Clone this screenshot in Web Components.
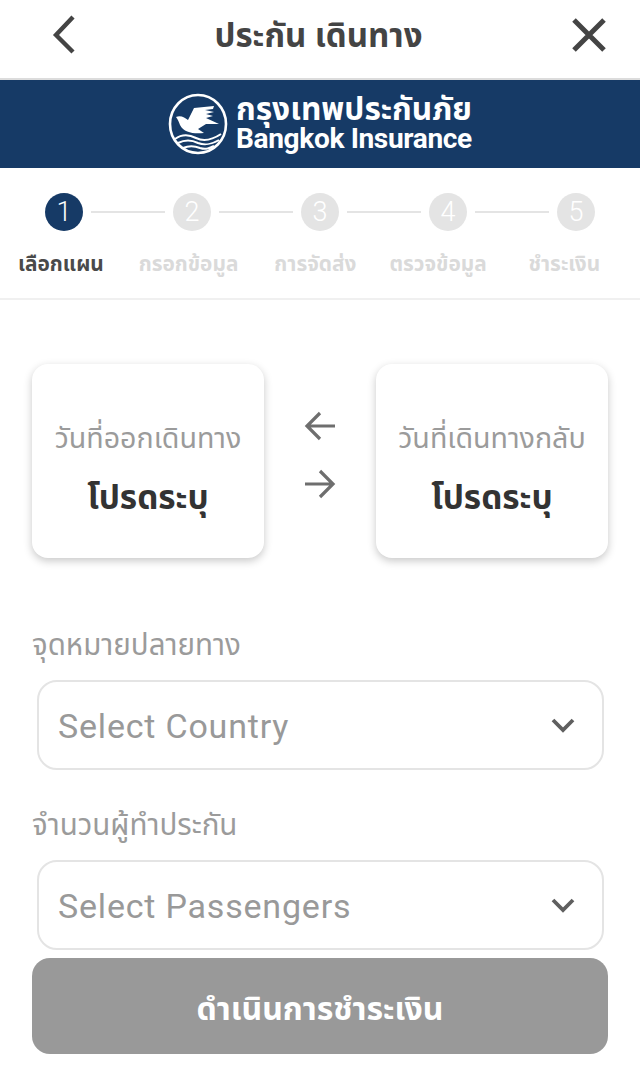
<!DOCTYPE html>
<html lang="th"><head><meta charset="utf-8"><title>ประกัน เดินทาง</title>
<style>
html,body{margin:0;padding:0;background:#fff}
body{width:640px;height:1086px;overflow:hidden;font-family:"Noto Sans","Noto Sans Thai","DejaVu Sans",sans-serif}
</style></head><body>
<app-page>
  <top-bar>ประกัน เดินทาง</top-bar>
  <brand-banner></brand-banner>
  <step-bar></step-bar>
  <date-row></date-row>
  <select-field label="จุดหมายปลายทาง" placeholder="Select Country" style="margin-top:68px"></select-field>
  <select-field label="จำนวนผู้ทำประกัน" placeholder="Select Passengers" style="margin-top:36px"></select-field>
  <pay-button>ดำเนินการชำระเงิน</pay-button>
</app-page>
<script>
const THAI='"Noto Sans","Noto Sans Thai","DejaVu Sans",sans-serif';
function def(name,html){
  customElements.define(name,class extends HTMLElement{
    connectedCallback(){
      if(this.shadowRoot)return;
      const r=this.attachShadow({mode:'open'});
      r.innerHTML=typeof html==='function'?html(this):html;
    }
  });
}
def('app-page',`<style>:host{display:flex;flex-direction:column;width:640px;height:1086px}</style><slot></slot>`);
def('top-bar',`<style>
:host{display:flex;align-items:center;justify-content:space-between;height:70px;padding:0 23px 8px 36px;border-bottom:2px solid #dcdcdc;background:#fff;color:#444;flex:none}
.t{font:700 33px/44px ${THAI};flex:1;text-align:center;padding-right:16px;white-space:nowrap}
svg{display:block;flex:none}
</style>
<svg width="56" height="56" viewBox="0 0 56 56"><path d="M37 10 L20 28 L37 45" fill="none" stroke="#444" stroke-width="4.400"/></svg>
<div class="t"><slot></slot></div>
<svg width="56" height="56" viewBox="0 0 56 56"><path d="M13 13 L43 43 M43 13 L13 43" fill="none" stroke="#444" stroke-width="5"/></svg>`);
def('brand-banner',`<style>
:host{display:flex;align-items:center;justify-content:center;height:88px;background:#163a66;color:#fff;gap:8px;flex:none}
.w{display:flex;flex-direction:column;align-items:flex-start;width:236px;margin-top:-2px}
.th{font:700 31px/30px ${THAI};white-space:nowrap;transform:scaleX(1.02);transform-origin:left;padding-bottom:2px}
.en{font:700 27px/28px "Roboto",sans-serif;white-space:nowrap;letter-spacing:-.35px;transform:scaleX(1.04);transform-origin:left}
svg{display:block;flex:none}
</style>
<svg width="60" height="62" viewBox="0 0 60 62" fill="none" stroke="#fff">
<ellipse cx="30" cy="31" rx="28" ry="29" stroke-width="2.600"/>
<path fill="#fff" stroke="none" d="M8 24 C13 22 17 25 20 27 L26 15 L46 13 L45 16 L37 17 L46 19 L38 21 L45 23 L38 25 L51 31 L38 31 L30 36 L36 40 C26 41 16 40 12 32 C11 29 10 27 8 24Z"/>
<path d="M7 46 C14 41 22 42 28 45 C36 49 44 47 53 41 M10 50 C18 46 24 47 30 50 C38 53 44 51 51 47 M15 55 C22 52 27 53 32 55 C38 57 42 55 46 53" stroke-width="2"/>
</svg>
<div class="w"><div class="th">กรุงเทพประกันภัย</div><div class="en">Bangkok Insurance</div></div>`);
def('step-bar',`<style>
:host{display:block;height:130px;border-bottom:2px solid #f0f0f0;flex:none}
.row{display:flex;align-items:center;padding:25px 45px 0;gap:8px}
.c{width:38px;height:38px;border-radius:50%;background:#e4e4e4;color:#fff;font:300 27px/38px "Roboto",sans-serif;text-align:center;flex:none}
.c.on{background:#163a66}
.l{flex:1;height:2px;background:#e4e4e4}
.labs{display:flex;padding:0 0 0 18px;margin-top:17px;font:700 20.800px/30px ${THAI};color:#dadada;white-space:nowrap}
.labs .on{color:#4a4a4a}
.labs span:nth-child(2){margin-left:35px}
.labs span:nth-child(3){margin-left:36px}
.labs span:nth-child(4){margin-left:33px}
.labs span:nth-child(5){margin-left:42px}
</style>
<div class="row"><div class="c on">1</div><div class="l"></div><div class="c">2</div><div class="l"></div><div class="c">3</div><div class="l"></div><div class="c">4</div><div class="l"></div><div class="c">5</div></div>
<div class="labs"><span class="on">เลือกแผน</span><span>กรอกข้อมูล</span><span>การจัดส่ง</span><span>ตรวจข้อมูล</span><span>ชำระเงิน</span></div>`);
def('date-card',h=>`<style>
:host{display:flex;flex-direction:column;align-items:center;justify-content:center;width:232px;height:194px;background:#fff;border-radius:16px;box-shadow:0 3px 9px rgba(0,0,0,.22);box-sizing:border-box;padding-top:15px}
.a{font:400 28.600px/36px ${THAI};color:#9b9b9b;white-space:nowrap}
.b{font:700 33.400px/44px ${THAI};color:#333;margin-top:19px;white-space:nowrap}
</style><div class="a">${h.getAttribute('label')}</div><div class="b">โปรดระบุ</div>`);
def('date-row',`<style>
:host{display:flex;justify-content:space-between;align-items:center;margin-top:64px;padding:0 32px;flex:none}
.m{display:flex;flex-direction:column;gap:22px;align-items:center;margin-bottom:12px}
svg{display:block}
</style>
<date-card label="วันที่ออกเดินทาง"></date-card>
<div class="m">
<svg width="36" height="36" viewBox="0 0 36 36" fill="none" stroke="#6e6e6e" stroke-width="3.200"><path d="M33 18 H5 M18 5 L5 18 L18 31"/></svg>
<svg width="36" height="36" viewBox="0 0 36 36" fill="none" stroke="#6e6e6e" stroke-width="3.200"><path d="M3 18 H31 M18 5 L31 18 L18 31"/></svg>
</div>
<date-card label="วันที่เดินทางกลับ"></date-card>`);
def('select-field',h=>`<style>
:host{display:block;padding:0 32px;flex:none}
.lab{font:400 29.500px/36px ${THAI};color:#9b9b9b;white-space:nowrap;height:36px}
.box{display:flex;align-items:center;justify-content:space-between;height:90px;box-sizing:border-box;margin:18px 4px 0 5px;border:2px solid #e4e4e4;border-radius:20px;padding:0 26px 0 19px;background:#fff}
.p{font:400 34px/40px "Roboto",sans-serif;color:#999;letter-spacing:.8px;padding-top:2px}
svg{display:block}
</style><div class="lab">${h.getAttribute('label')}</div>
<div class="box"><span class="p">${h.getAttribute('placeholder')}</span>
<svg width="26" height="18" viewBox="0 0 26 18" fill="none" stroke="#5f5f5f" stroke-width="3.800"><path d="M3 4 L13 14 L23 4"/></svg></div>`);
def('pay-button',`<style>
:host{display:flex;align-items:center;justify-content:center;height:92px;padding-top:4px;margin:8px 32px 0;background:#999;border-radius:18px;color:#fff;font:700 32px/40px ${THAI};flex:none}
</style><slot></slot>`);
</script>
</body></html>
